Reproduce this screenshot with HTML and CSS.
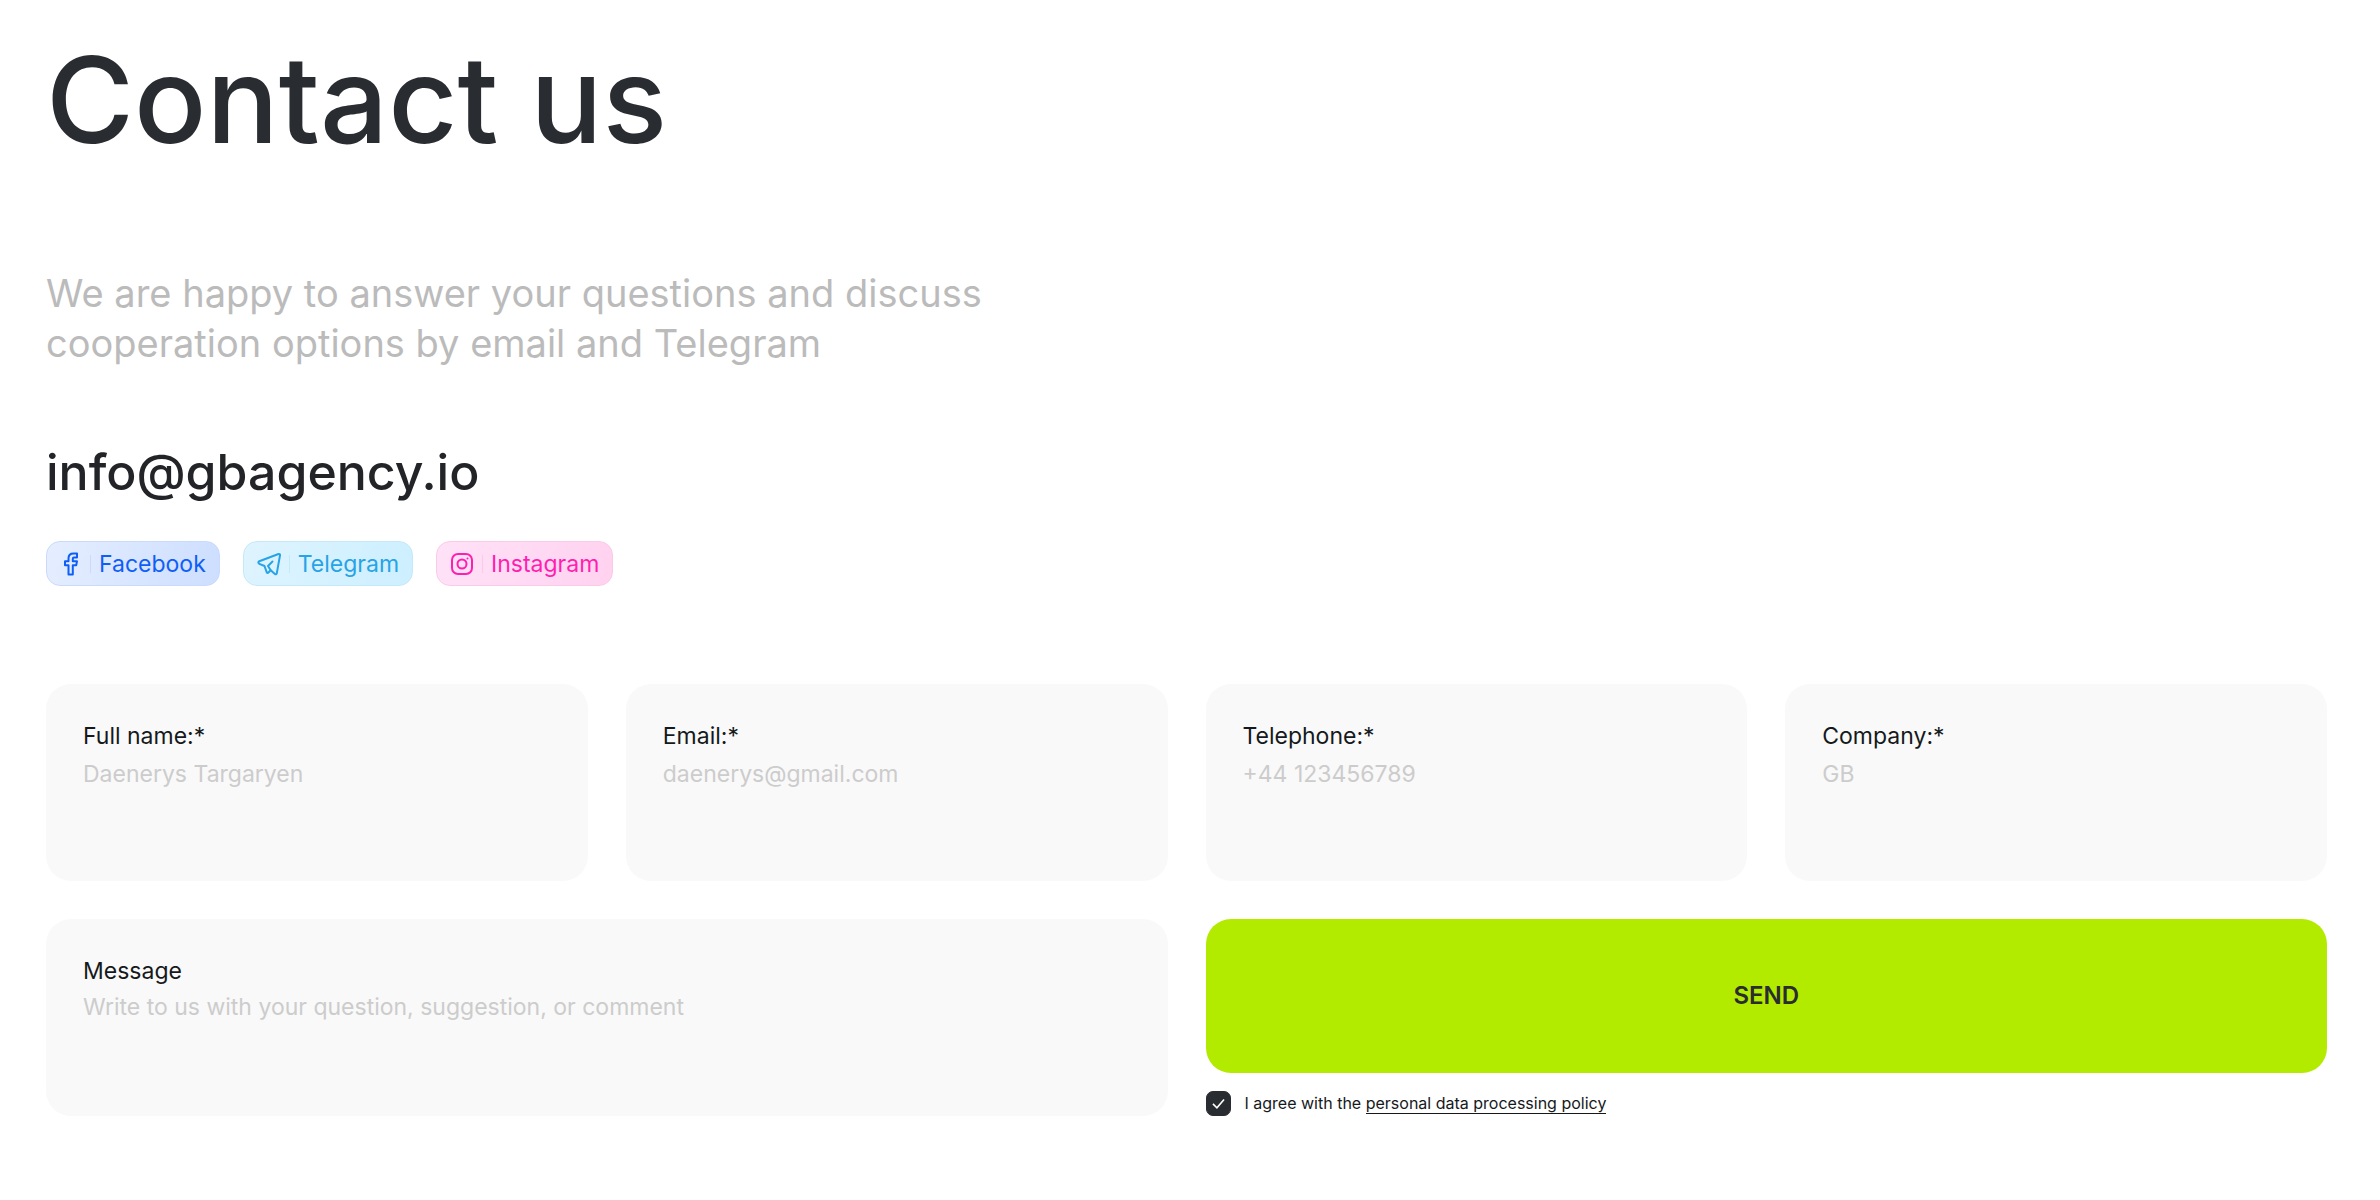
FILE: index.html
```html
<!DOCTYPE html>
<html lang="en">
<head>
	<meta charset="UTF-8">
	<meta name="viewport" content="width=device-width, initial-scale=1">
	<title>Contact us</title>
	<link rel="stylesheet" href="styles.css">
</head>
<body>
	<main class="container">
		<h1>Contact us</h1>
		<p class="intro">We are happy to answer your questions and discuss<br>cooperation options by email and Telegram</p>
		<a class="email" href="mailto:info@gbagency.io">info@gbagency.io</a>
		<nav class="socials">
			<a class="social facebook" href="#">
				<svg width="22" height="24" viewBox="0 0 22 24" fill="none" stroke="currentColor" stroke-width="2" stroke-linejoin="round">
					<path d="M17 1.500h-3.500C10.300 1.500 8.500 3.300 8.500 6.300V9.200H5v4h3.500v9.300h4.300v-9.300h3.400l.8-4h-4.200V6.800c0-.8.400-1.200 1.200-1.200h3z"/>
				</svg>
				<span>Facebook</span>
			</a>
			<a class="social telegram" href="#">
				<svg width="24" height="24" viewBox="0 0 24 24" fill="none" stroke="currentColor" stroke-width="2" stroke-linecap="round" stroke-linejoin="round">
					<path d="M21.500 2 2.300 9.300c-1.300.5-1.300 2 0 2.500L7.500 14l2.200 6.200c.3.900 1 1 1.700.300l2.300-2.300 4.200 3.700c.8.700 1.700.4 1.900-.6L23 3.400c.2-1-.5-1.800-1.500-1.400z"/>
					<path d="M15.500 9.500 11 14l2.700 4.200"/>
				</svg>
				<span>Telegram</span>
			</a>
			<a class="social instagram" href="#">
				<svg width="24" height="24" viewBox="0 0 24 24" fill="none" stroke="currentColor" stroke-width="2">
					<rect x="2" y="2" width="20" height="20" rx="6"/>
					<circle cx="12" cy="12" r="4.500"/>
					<circle cx="17.500" cy="6.500" r="1" fill="currentColor" stroke="none"/>
				</svg>
				<span>Instagram</span>
			</a>
		</nav>
		<form class="form">
			<div class="field">
				<label for="name">Full name:*</label>
				<input type="text" id="name" name="name" placeholder="Daenerys Targaryen">
			</div>
			<div class="field">
				<label for="email">Email:*</label>
				<input type="email" id="email" name="email" placeholder="daenerys@gmail.com">
			</div>
			<div class="field">
				<label for="phone">Telephone:*</label>
				<input type="tel" id="phone" name="phone" placeholder="+44 123456789">
			</div>
			<div class="field">
				<label for="company">Company:*</label>
				<input type="text" id="company" name="company" placeholder="GB">
			</div>
			<div class="field wide">
				<label for="message">Message</label>
				<textarea id="message" name="message" rows="2" placeholder="Write to us with your question, suggestion, or comment"></textarea>
			</div>
			<div class="submit wide">
				<button type="submit">SEND</button>
				<div class="agree">
					<span class="check">
						<input type="checkbox" id="agree" name="agree" checked>
						<svg viewBox="0 0 24 24" fill="none" stroke="currentColor" stroke-width="2">
							<path d="M5 12.500 10 17.500 19 7"/>
						</svg>
					</span>
					<label for="agree">I agree with the <a href="#">personal data processing policy</a></label>
				</div>
			</div>
		</form>
	</main>
</body>
</html>
```
FILE: styles.css
```css
* {
	box-sizing: border-box;
}
body {
	margin: 0;
	background-color: #fff;
	color: #16191c;
	font-family: Inter, "Liberation Sans", sans-serif;
	font-size: 23px;
	line-height: 32px;
}
a {
	color: inherit;
	text-decoration: none;
}
.container {
	padding: 24px 53px 80px 46px;
}
h1 {
	margin: 0;
	color: #292c31;
	font-size: 120px;
	line-height: 152px;
	font-weight: 500;
}
.intro {
	margin: 92px 0 0;
	color: #bbb;
	font-size: 38px;
	line-height: 50px;
}
.email {
	display: block;
	width: fit-content;
	margin-top: 72px;
	color: #222427;
	font-size: 50px;
	line-height: 64px;
	font-weight: 500;
}
.socials {
	display: flex;
	gap: 23px;
	margin-top: 37px;
}
.social {
	display: flex;
	align-items: center;
	gap: 8px;
	height: 45px;
	padding: 0 13px;
	border: 1px solid;
	border-radius: 14px;
}
.social span {
	padding-left: 8px;
	border-left: 1px solid;
	border-color: inherit;
	line-height: 18px;
}
.facebook {
	color: #0f5ef7;
	background: linear-gradient(100deg, #e5eeff, #cddeff);
	border-color: #c9dafa;
}
.telegram {
	color: #27a3e6;
	background: linear-gradient(100deg, #def4ff, #cdefff);
	border-color: #c4e9f8;
}
.instagram {
	color: #ff1faf;
	background: linear-gradient(100deg, #ffe2f7, #ffd2f0);
	border-color: #facbe8;
}
.form {
	display: grid;
	grid-template-columns: repeat(4, 1fr);
	gap: 38px;
	margin-top: 98px;
}
.field {
	display: flex;
	flex-direction: column;
	gap: 6px;
	min-height: 197px;
	padding: 36px 37px;
	background-color: #f9f9f9;
	border-radius: 25px;
}
.wide {
	grid-column: span 2;
}
.field input,
.field textarea {
	width: 100%;
	padding: 0;
	border: none;
	outline: none;
	background: none;
	color: inherit;
	font: inherit;
	resize: none;
}
.field.wide {
	gap: 4px;
}
::placeholder {
	color: #ccc;
	opacity: 1;
}
.submit {
	display: flex;
	flex-direction: column;
	gap: 18px;
}
button {
	flex: 1;
	border: none;
	border-radius: 25px;
	background-color: #b2eb00;
	color: #292c31;
	font: inherit;
	font-size: 24px;
	font-weight: 600;
	cursor: pointer;
}
.agree {
	display: flex;
	align-items: center;
	gap: 14px;
	font-size: 16px;
	line-height: 25px;
}
.agree a {
	border-bottom: 1px solid;
}
.check {
	position: relative;
	width: 25px;
	height: 25px;
}
.check input {
	appearance: none;
	width: 25px;
	height: 25px;
	margin: 0;
	border: 1px solid #292c31;
	border-radius: 7px;
	display: block;
}
.check input:checked {
	background-color: #292c31;
}
.check svg {
	position: absolute;
	inset: 3px;
	color: #fff;
	pointer-events: none;
}
```
